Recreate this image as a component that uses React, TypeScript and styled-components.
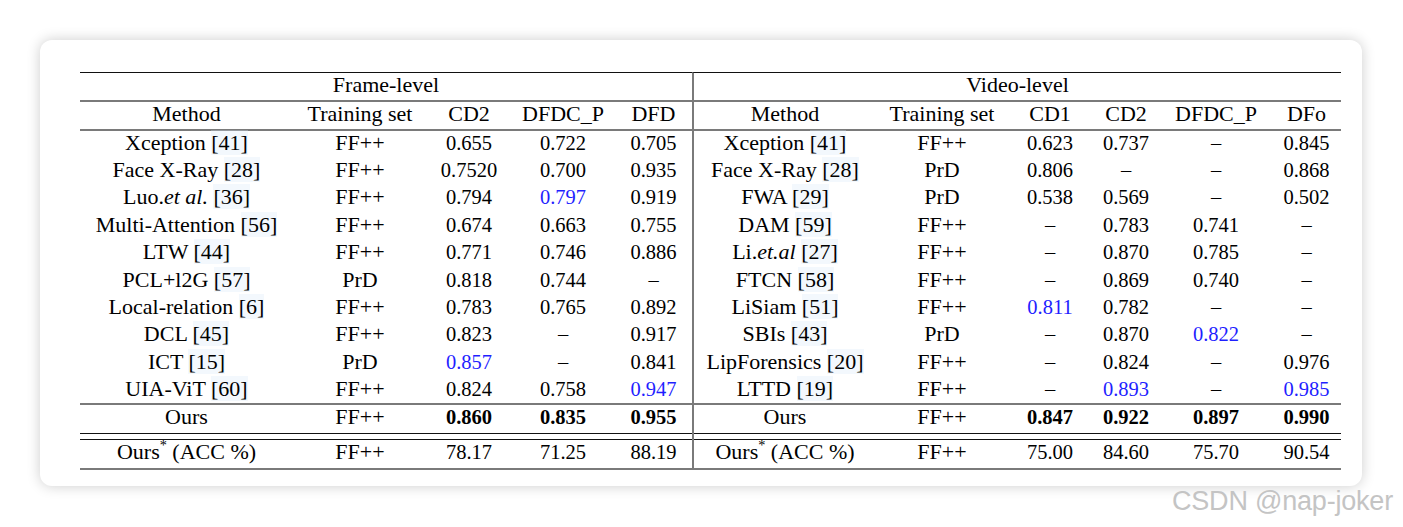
import React from "react";
import styled, { createGlobalStyle } from "styled-components";

const Global = createGlobalStyle`
  html, body { margin: 0; padding: 0; background: #ffffff; }
  body { width: 1403px; height: 527px; position: relative; overflow: hidden; }
`;

const Card = styled.div`
  margin: 40px 0 0 40px;
  width: 1322px;
  height: 446px;
  box-sizing: border-box;
  padding: 32px 21px 0 40px;
  background: #fff;
  border-radius: 12px;
  box-shadow: 0 0 14px rgba(0, 0, 0, 0.2);
`;

const Table = styled.div`
  display: flex;
  width: 1261px;
  font-family: "Liberation Serif", "Times New Roman", serif;
  color: #000;
`;

const Panel = styled.div<{ $divider?: boolean }>`
  display: flex;
  flex-direction: column;
  border-left: ${(p) => (p.$divider ? "2px solid #7a7a7a" : "none")};
  border-top: 1px solid #111;
  border-bottom: 2px solid #7a7a7a;
`;

const Row = styled.div<{ $cols: string; $h: number; $rule?: "gray" | "black" | "none" }>`
  display: grid;
  grid-template-columns: ${(p) => p.$cols};
  height: ${(p) => p.$h}px;
  align-items: center;
  border-bottom: ${(p) =>
    p.$rule === "gray" ? "2px solid #7a7a7a" : p.$rule === "black" ? "1px solid #111" : "none"};
`;

const Spacer = styled.div`
  height: 5px;
  border-bottom: 1px solid #111;
`;

const Title = styled.div<{ $span: number }>`
  grid-column: 1 / span ${(p) => p.$span};
  text-align: center;
  font-size: 22px;
  line-height: 22px;
  padding-bottom: 4px;
`;

const Cell = styled.div<{ $num?: boolean; $blue?: boolean; $bold?: boolean }>`
  text-align: center;
  white-space: nowrap;
  font-size: ${(p) => (p.$num ? "20.5px" : "22px")};
  font-weight: ${(p) => (p.$bold ? 700 : 400)};
  color: ${(p) => (p.$blue ? "#1f1fff" : "#000")};
  line-height: 22px;
  padding-bottom: 4px;
`;

const Cite = styled.span`
  background: rgba(214, 232, 248, 0.3);
`;

const Em = styled.i`
  font-style: italic;
`;

const Sup = styled.sup`
  font-size: 0.65em;
  vertical-align: 0.65em;
  line-height: 0;
`;

const Watermark = styled.div`
  position: absolute;
  left: 1172px;
  top: 486px;
  font-family: "Liberation Sans", Arial, sans-serif;
  font-size: 27px;
  letter-spacing: -0.2px;
  color: #c4c4c4;
  white-space: nowrap;
`;

type V = string | { v: string; blue?: boolean };
type Method = { name: React.ReactNode; cite: string };

const frameCols = "213px 134px 84px 104px 77px";
const videoCols = "182px 132px 84px 68px 112px 69px";

const frameRows: { m: Method; t: string; vals: V[] }[] = [
  { m: { name: "Xception", cite: "41" }, t: "FF++", vals: ["0.655", "0.722", "0.705"] },
  { m: { name: "Face X-Ray", cite: "28" }, t: "FF++", vals: ["0.7520", "0.700", "0.935"] },
  { m: { name: <>Luo.<Em>et al.</Em></>, cite: "36" }, t: "FF++", vals: ["0.794", { v: "0.797", blue: true }, "0.919"] },
  { m: { name: "Multi-Attention", cite: "56" }, t: "FF++", vals: ["0.674", "0.663", "0.755"] },
  { m: { name: "LTW", cite: "44" }, t: "FF++", vals: ["0.771", "0.746", "0.886"] },
  { m: { name: "PCL+l2G", cite: "57" }, t: "PrD", vals: ["0.818", "0.744", "–"] },
  { m: { name: "Local-relation", cite: "6" }, t: "FF++", vals: ["0.783", "0.765", "0.892"] },
  { m: { name: "DCL", cite: "45" }, t: "FF++", vals: ["0.823", "–", "0.917"] },
  { m: { name: "ICT", cite: "15" }, t: "PrD", vals: [{ v: "0.857", blue: true }, "–", "0.841"] },
  { m: { name: "UIA-ViT", cite: "60" }, t: "FF++", vals: ["0.824", "0.758", { v: "0.947", blue: true }] },
];

const videoRows: { m: Method; t: string; vals: V[] }[] = [
  { m: { name: "Xception", cite: "41" }, t: "FF++", vals: ["0.623", "0.737", "–", "0.845"] },
  { m: { name: "Face X-Ray", cite: "28" }, t: "PrD", vals: ["0.806", "–", "–", "0.868"] },
  { m: { name: "FWA", cite: "29" }, t: "PrD", vals: ["0.538", "0.569", "–", "0.502"] },
  { m: { name: "DAM", cite: "59" }, t: "FF++", vals: ["–", "0.783", "0.741", "–"] },
  { m: { name: <>Li.<Em>et.al</Em></>, cite: "27" }, t: "FF++", vals: ["–", "0.870", "0.785", "–"] },
  { m: { name: "FTCN", cite: "58" }, t: "FF++", vals: ["–", "0.869", "0.740", "–"] },
  { m: { name: "LiSiam", cite: "51" }, t: "FF++", vals: [{ v: "0.811", blue: true }, "0.782", "–", "–"] },
  { m: { name: "SBIs", cite: "43" }, t: "PrD", vals: ["–", "0.870", { v: "0.822", blue: true }, "–"] },
  { m: { name: "LipForensics", cite: "20" }, t: "FF++", vals: ["–", "0.824", "–", "0.976"] },
  { m: { name: "LTTD", cite: "19" }, t: "FF++", vals: ["–", { v: "0.893", blue: true }, "–", { v: "0.985", blue: true }] },
];

const ValCell: React.FC<{ v: V; bold?: boolean }> = ({ v, bold }) => {
  const val = typeof v === "string" ? v : v.v;
  const blue = typeof v === "string" ? false : !!v.blue;
  return (
    <Cell $num $blue={blue} $bold={bold}>
      {val}
    </Cell>
  );
};

const Section: React.FC<{
  cols: string;
  title: string;
  headers: string[];
  rows: { m: Method; t: string; vals: V[] }[];
  ours: string[];
  acc: string[];
  divider?: boolean;
}> = ({ cols, title, headers, rows, ours, acc, divider }) => (
  <Panel $divider={divider}>
    <Row $cols={cols} $h={27} $rule="gray">
      <Title $span={headers.length}>{title}</Title>
    </Row>
    <Row $cols={cols} $h={27} $rule="gray">
      {headers.map((h) => (
        <Cell key={h}>{h}</Cell>
      ))}
    </Row>
    {rows.map((r, i) => (
      <Row key={i} $cols={cols} $h={i === rows.length - 1 ? 25.4 : 27.4} $rule={i === rows.length - 1 ? "gray" : "none"}>
        <Cell>
          {r.m.name} <Cite>[{r.m.cite}]</Cite>
        </Cell>
        <Cell>{r.t}</Cell>
        {r.vals.map((v, j) => (
          <ValCell key={j} v={v} />
        ))}
      </Row>
    ))}
    <Row $cols={cols} $h={28} $rule="black">
      <Cell>Ours</Cell>
      <Cell>FF++</Cell>
      {ours.map((v, j) => (
        <ValCell key={j} v={v} bold />
      ))}
    </Row>
    <Spacer />
    <Row $cols={cols} $h={28} $rule="none">
      <Cell>
        Ours<Sup>*</Sup> (ACC %)
      </Cell>
      <Cell>FF++</Cell>
      {acc.map((v, j) => (
        <ValCell key={j} v={v} />
      ))}
    </Row>
  </Panel>
);

export default function App() {
  return (
    <>
      <Global />
      <Card>
        <Table>
          <Section
            cols={frameCols}
            title="Frame-level"
            headers={["Method", "Training set", "CD2", "DFDC_P", "DFD"]}
            rows={frameRows}
            ours={["0.860", "0.835", "0.955"]}
            acc={["78.17", "71.25", "88.19"]}
          />
          <Section
            cols={videoCols}
            title="Video-level"
            headers={["Method", "Training set", "CD1", "CD2", "DFDC_P", "DFo"]}
            rows={videoRows}
            ours={["0.847", "0.922", "0.897", "0.990"]}
            acc={["75.00", "84.60", "75.70", "90.54"]}
            divider
          />
        </Table>
      </Card>
      <Watermark>CSDN @nap-joker</Watermark>
    </>
  );
}
